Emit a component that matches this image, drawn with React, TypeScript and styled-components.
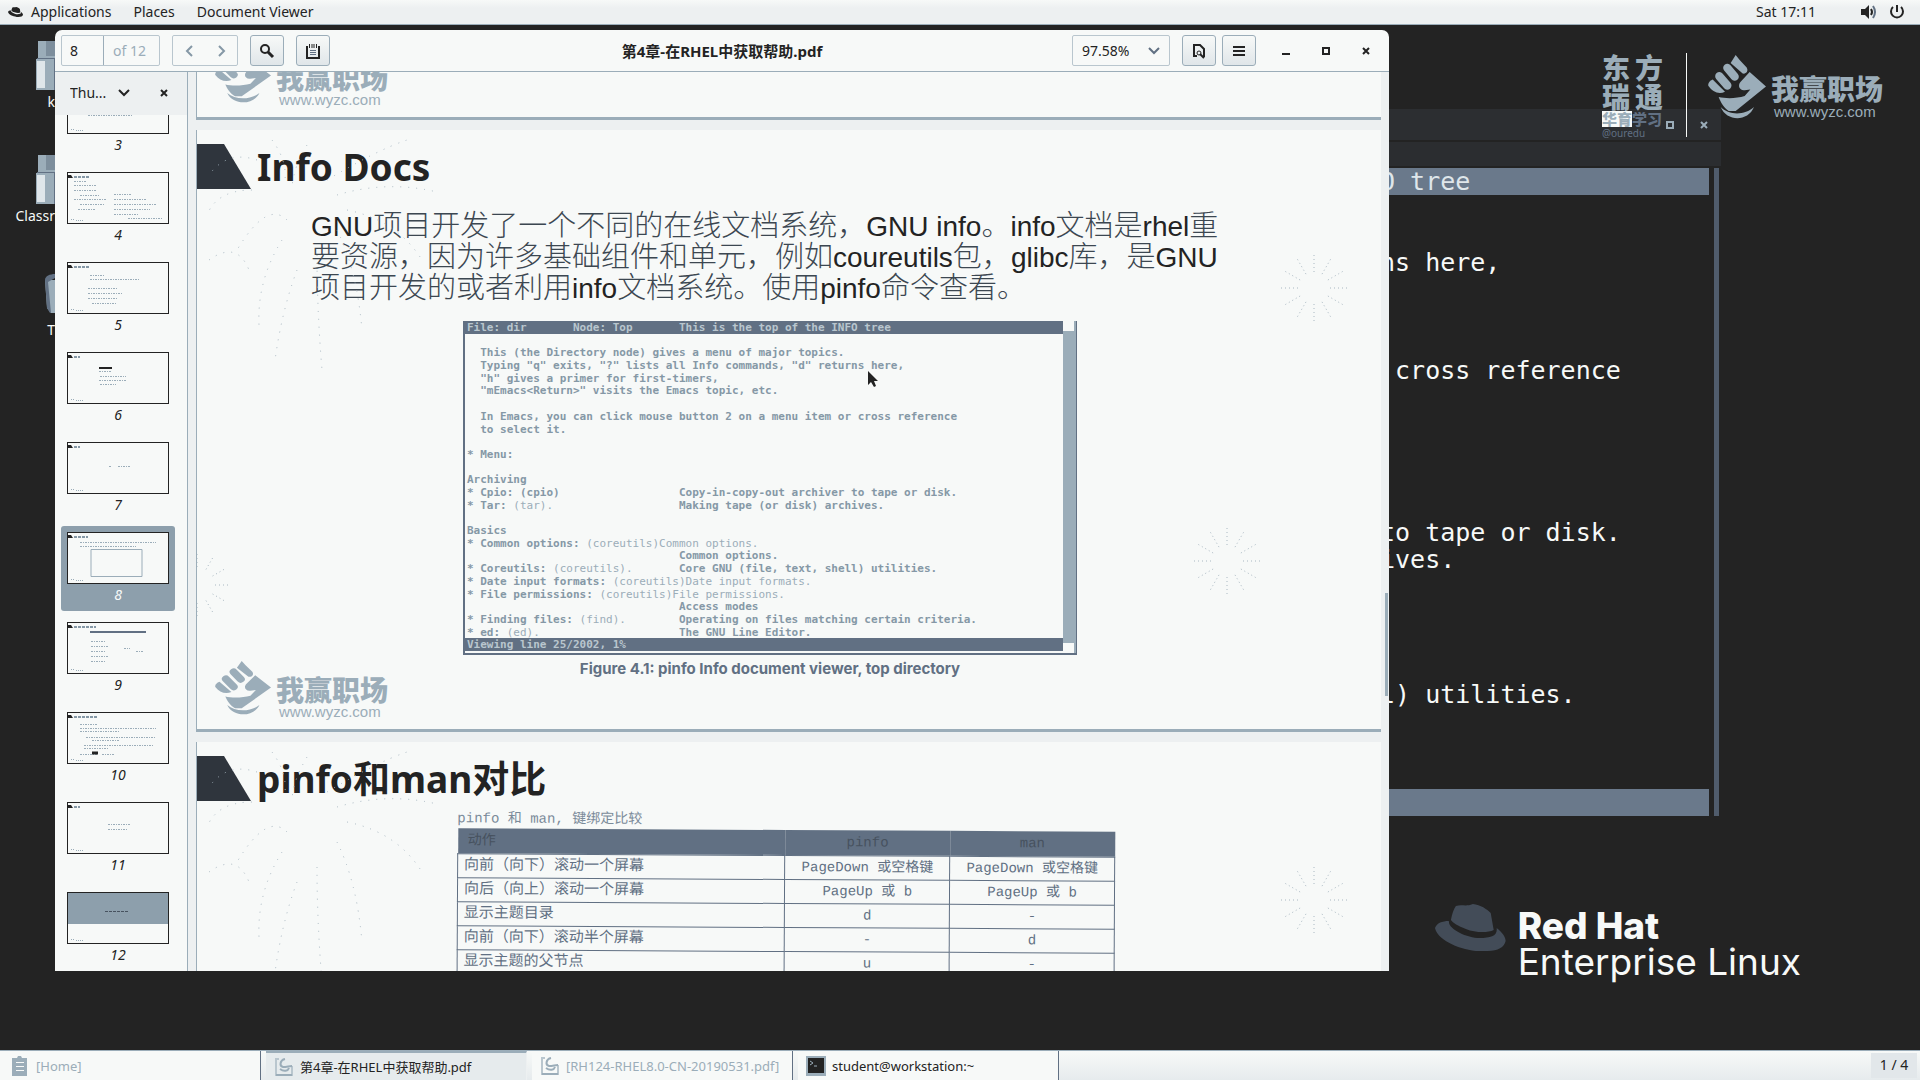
import React from "react";
import styled, { createGlobalStyle } from "styled-components";

const c = {
  paper: "#f7f9f8",
  ink: "#232323",
  mist: "#9badb9",
  slate: "#617083",
  haze: "#edf0f1",
};

const ui = `"Noto Sans", "Noto Sans CJK SC", sans-serif`;
const mono = `"DejaVu Sans Mono", monospace`;

const GlobalStyle = createGlobalStyle`
  * { box-sizing: border-box; }
  body { margin: 0; background: ${c.ink}; }
  button, input, select { font: inherit; color: inherit; margin: 0; }
  h1, h2, p, ul, figure { margin: 0; padding: 0; }
`;

const Screen = styled.div`
  height: 100vh;
  display: flex;
  flex-direction: column;
  overflow: hidden;
  background: ${c.ink};
  color: ${c.ink};
  font: 14px/20px ${ui};
`;

const TopBar = styled.header`
  display: flex;
  align-items: center;
  height: 25px;
  padding: 0 15px 0 8px;
  background: linear-gradient(${c.paper}, ${c.haze} 8px);
  border-bottom: 1px solid ${c.mist};
`;

const TopItem = styled.button`
  display: flex;
  align-items: center;
  gap: 8px;
  margin-right: 22px;
  padding: 0;
  border: 0;
  background: none;
  line-height: 20px;
`;

const Tray = styled.div`
  display: flex;
  align-items: center;
  gap: 12px;
  margin-left: auto;
`;

const Clock = styled.span`
  margin-right: 33px;
`;

const Workspace = styled.main`
  position: relative;
  flex: 1;
  min-height: 0;
`;

/* Desktop launchers */
const Launchers = styled.div`
  display: flex;
  flex-direction: column;
  width: 55px;
  padding-top: 16px;
  color: ${c.paper};
`;

const Launcher = styled.div`
  display: flex;
  flex-direction: column;
  align-items: flex-end;
  gap: 2px;
  height: 114px;
`;

/* Terminal window */
const Terminal = styled.section`
  position: absolute;
  left: 1380px;
  right: 199px;
  top: 84px;
  bottom: 234px;
  display: flex;
  flex-direction: column;
  overflow: hidden;
`;

const TermTitle = styled.div`
  display: flex;
  justify-content: flex-end;
  align-items: center;
  gap: 26px;
  height: 31px;
  padding: 0 13px;
  background: #2c2e31;
`;

const TermMenu = styled.div`
  height: 24px;
  margin: 2px 0;
  background: #2b2d30;
`;

const TermRow = styled.div`
  display: flex;
  gap: 3px;
`;

const TermScreen = styled.div`
  flex: 1;
  overflow: hidden;
  color: ${c.paper};
  font: 25px/27px ${mono};
  white-space: pre;
`;

const TermBar = styled.div`
  height: 27px;
  background: #6a798b;
  color: #dfe6ea;
`;

const TermLine = styled.div`
  height: 27px;
`;

const TermScroll = styled.div`
  width: 9px;
  padding: 0 2px;
  background: #505c6c content-box;
`;

/* Branding on the wallpaper */
const Brand = styled.div`
  position: absolute;
  right: 37px;
  top: 28px;
  display: flex;
  align-items: flex-start;
  color: ${c.mist};
`;

const School = styled.div`
  display: grid;
  grid-template-columns: 33px 34px;
  font: 900 28px/29px "Noto Sans CJK SC", sans-serif;
`;

const SchoolTag = styled.div`
  display: flex;
  grid-column: span 2;
  align-items: center;
  font-size: 15px;
  line-height: 16px;
  b { background: ${c.paper}; color: ${c.mist}; }
  span { color: ${c.slate}; }
`;

const SchoolNote = styled.small`
  grid-column: span 2;
  color: ${c.slate};
  font: 10px/12px ${ui};
`;

const Rule = styled.div`
  width: 1px;
  height: 84px;
  margin: 0 21px 0 17px;
  background: ${c.paper};
`;

const LogoBox = styled.div<{ $large?: boolean }>`
  display: flex;
  align-items: flex-start;
  gap: 5px;
  padding-top: ${(p) => (p.$large ? 2 : 0)}px;
  color: ${c.mist};
`;

const LogoWords = styled.div<{ $large?: boolean }>`
  padding-top: ${(p) => (p.$large ? 16 : 12)}px;
  b {
    display: block;
    font: 900 28px / ${(p) => (p.$large ? 34 : 32)}px "Noto Sans CJK SC", sans-serif;
  }
  span { display: block; padding-left: 3px; font: 15px/14px "Liberation Sans", sans-serif; }
`;

const RedHat = styled.div`
  position: absolute;
  right: 119px;
  bottom: 70px;
  display: flex;
  gap: 12px;
  width: 366px;
  color: ${c.paper};
  font: 37px/36px Inter, sans-serif;
  white-space: nowrap;
  b { display: block; font-weight: 800; }
  div { padding-top: 4px; }
`;

/* Document viewer */
const Viewer = styled.section`
  position: absolute;
  left: 55px;
  right: 531px;
  top: 5px;
  bottom: 79px;
  display: flex;
  flex-direction: column;
  overflow: hidden;
  border-radius: 7px 7px 0 0;
  background: ${c.paper};
`;

const Toolbar = styled.div`
  display: grid;
  grid-template-columns: 1fr auto 1fr;
  align-items: center;
  height: 42px;
  padding: 0 6px;
  border-bottom: 1px solid ${c.mist};
`;

const Tools = styled.div<{ $end?: boolean }>`
  display: flex;
  align-items: center;
  justify-content: ${(p) => (p.$end ? "flex-end" : "flex-start")};
  gap: ${(p) => (p.$end ? 6 : 12)}px;
`;

const Group = styled.div`
  display: flex;
  height: 31px;
  border: 1px solid #b9c6ce;
  border-radius: 2px;
  color: ${c.mist};
  > * + * { border-left: 1px solid ${c.mist}; }
`;

const PageInput = styled.input`
  width: 41px;
  padding: 0 8px;
  border: 0;
  background: none;
  color: ${c.ink};
`;

const PageTotal = styled.label`
  width: 56px;
  padding: 0 9px;
  line-height: 29px;
`;

const NavButton = styled.button`
  display: grid;
  place-items: center;
  width: 32px;
  padding: 0;
  border: 0;
  background: none;
`;

const ToolButton = styled.button`
  display: grid;
  place-items: center;
  width: 34px;
  height: 31px;
  padding: 0;
  border: 1px solid ${c.mist};
  border-radius: 3px;
  background: linear-gradient(${c.paper}, #e0e6e9);
`;

const DocTitle = styled.h1`
  font: 700 15px/20px ${ui};
`;

const Drop = styled.div`
  display: grid;
  align-items: center;
  > * { grid-area: 1 / 1; }
  svg { justify-self: end; margin-right: 10px; pointer-events: none; }
`;

const ZoomSelect = styled.select`
  appearance: none;
  width: 98px;
  height: 31px;
  padding: 0 28px 0 9px;
  border: 1px solid #b9c6ce;
  border-radius: 2px;
  background: none;
`;

const ZoomWrap = styled(Drop)`
  margin-right: 6px;
`;

const WinButtons = styled.div`
  display: flex;
  gap: 6px;
  margin-left: 7px;
`;

const WinButton = styled.button`
  display: grid;
  place-items: center;
  width: 34px;
  height: 30px;
  padding: 0;
  border: 0;
  background: none;
`;

const Body = styled.div`
  flex: 1;
  min-height: 0;
  display: flex;
`;

const Sidebar = styled.aside`
  width: 133px;
  display: flex;
  flex-direction: column;
  border-right: 1px solid ${c.mist};
`;

const SideHead = styled.div`
  display: flex;
  align-items: center;
  justify-content: space-between;
  flex: none;
  height: 43px;
  padding: 0 15px 2px;
  background: ${c.haze};
`;

const SideSelect = styled.select`
  appearance: none;
  width: 70px;
  border: 0;
  padding: 0;
  background: none;
`;

const PlainButton = styled.button`
  display: grid;
  padding: 4px;
  border: 0;
  background: none;
`;

const Thumbs = styled.div`
  flex: 1;
  min-height: 0;
  display: flex;
  flex-direction: column;
  justify-content: flex-end;
  gap: 5px;
  padding: 0 12px 0 6px;
  overflow: hidden;
`;

const Thumb = styled.button<{ $on?: boolean }>`
  flex: none;
  display: flex;
  flex-direction: column;
  align-items: center;
  gap: 1px;
  height: 85px;
  padding: 6px 0 0;
  border: 0;
  border-radius: 3px;
  background: ${(p) => (p.$on ? "#8d9fac" : "none")};
  color: ${(p) => (p.$on ? c.paper : c.ink)};
  font-style: italic;
`;

const ThumbArt = styled.svg`
  width: 102px;
  height: 52px;
  border: 1px solid ${c.ink};
  background: ${c.paper};
`;

const Pages = styled.div`
  flex: 1;
  min-width: 0;
  display: flex;
  flex-direction: column;
  gap: 10px;
  padding: 0 8px;
  background: ${c.haze};
  overflow: hidden;
`;

const Page = styled.article<{ $kind: "tail" | "full" | "head" }>`
  position: relative;
  flex: ${(p) => (p.$kind === "head" ? "1 1 0" : "none")};
  height: ${(p) => (p.$kind === "tail" ? "48px" : p.$kind === "full" ? "602px" : "auto")};
  min-height: 0;
  display: flex;
  flex-direction: column;
  overflow: hidden;
  background: ${c.paper};
  border-left: 1px solid ${c.mist};
  border-bottom: ${(p) => (p.$kind === "head" ? 0 : 3)}px solid ${c.mist};
`;

const Sparks = styled.svg`
  position: absolute;
  inset: 0;
  width: 100%;
  height: 100%;
  pointer-events: none;
`;

const Heading = styled.div`
  display: flex;
  align-items: center;
  gap: 6px;
  padding-top: 14px;
  h2 { font: 700 37px/45px "Noto Sans", "Noto Sans CJK SC", sans-serif; }
`;

const Prose = styled.p`
  padding: 22px 0 0 114px;
  color: #3c4751;
  font: 300 29px/31px "Liberation Sans", "Noto Sans CJK SC", sans-serif;
  white-space: nowrap;
`;

const Latin = styled.span`
  color: ${c.ink};
  font-size: 28px;
  font-weight: 400;
`;

const Shot = styled.figure`
  align-self: center;
  margin: 17px 38px 0 0;
  text-align: center;
`;

const Console = styled.div`
  display: grid;
  grid-template-columns: 1fr 13px;
  grid-template-rows: minmax(0, 1fr);
  width: 614px;
  height: 334px;
  border: solid ${c.slate};
  border-width: 0 1px 2px 2px;
  text-align: left;
`;

const ConsoleLines = styled.div`
  display: grid;
  grid-auto-rows: minmax(0, 1fr);
  padding-bottom: 2px;
  font: 700 11px/14px ${mono};
  color: #8598a6;
`;

const ConsoleLine = styled.div<{ $bar?: boolean }>`
  display: flex;
  min-height: 0;
  padding-left: 2px;
  white-space: pre;
  background: ${(p) => (p.$bar ? c.slate : "none")};
  color: ${(p) => (p.$bar ? "#b9c6ce" : "inherit")};
  i { font-style: normal; font-weight: 400; color: ${c.mist}; }
`;

const ConsoleScroll = styled.div`
  display: flex;
  flex-direction: column;
  justify-content: space-between;
  background: ${c.mist};
  &::before, &::after {
    content: "";
    width: 11px;
    height: 10px;
    background: ${c.paper};
  }
`;

const Caption = styled.figcaption`
  padding-top: 4px;
  color: ${c.slate};
  font: 700 15px/20px Inter, sans-serif;
`;

/* Watermark laid over the lower left corner of every slide */
const PageLogo = styled.div`
  position: absolute;
  left: 18px;
  bottom: 10px;
`;

const KeyTable = styled.table`
  width: 658px;
  margin: 0 auto;
  border-collapse: collapse;
  color: ${c.slate};
  font: 14px/23px "Liberation Mono", "Noto Sans CJK SC", monospace;
  transform: rotate(0.3deg);
  caption { text-align: left; color: #7b8b9a; line-height: 19px; }
  th { height: 25px; padding: 0 10px; background: ${c.slate}; color: #47525f; font-weight: 400; }
  td { height: 24px; padding: 0; border: 1px solid ${c.slate}; text-align: center; }
  th:first-child { text-align: left; }
  td:first-child { padding-left: 6px; text-align: left; font-size: 15px; }
`;

const TableHolder = styled.div`
  padding: 10px 6px 0 0;
`;

const ScrollThumb = styled.div`
  position: absolute;
  right: 1px;
  top: 563px;
  width: 3px;
  height: 103px;
  background: ${c.mist};
`;

const Pointer = styled.svg`
  position: absolute;
  left: 868px;
  top: 346px;
`;

/* Bottom window list */
const TaskBar = styled.footer`
  display: flex;
  height: 30px;
  gap: 5px;
  border-top: 1px solid ${c.mist};
  background: linear-gradient(${c.paper}, #e6ebed);
`;

const Task = styled.button<{ $on?: boolean; $dim?: boolean }>`
  display: flex;
  align-items: center;
  gap: 6px;
  width: 261px;
  padding: 0 8px;
  border: 0;
  border-right: 1px solid ${(p) => (p.$on ? c.haze : c.slate)};
  border-top: ${(p) => (p.$on ? 2 : 0)}px solid ${c.mist};
  background: ${(p) => (p.$on ? "#e6ebed" : c.paper)};
  color: ${(p) => (p.$dim ? c.mist : c.ink)};
  font: 13px/18px ${ui};
  white-space: nowrap;
`;

const Pager = styled.span`
  width: 46px;
  margin: 2px 3px 2px auto;
  background: #e2e7ea;
  text-align: center;
  line-height: 24px;
`;

const Chevron = ({ d = "M1 1l5 5 5-5", w = 12, h = 8, color = c.slate }) => (
  <svg width={w} height={h} viewBox={`0 0 ${w} ${h}`} fill="none" stroke={color} strokeWidth="2">
    <path d={d} />
  </svg>
);

const Cross = ({ color = c.ink, size = 8 }) => (
  <svg width={size} height={size} viewBox="0 0 8 8" stroke={color} strokeWidth="2">
    <path d="M1 1l6 6M7 1l-6 6" />
  </svg>
);

const Fist = ({ width = 56, height = 54 }) => (
  <svg width={width} height={height} viewBox="0 0 174 193" preserveAspectRatio="none" fill="currentColor">
    <path d="M83 0l12 15 21 23c6 10-1 20-12 18L68 24z" />
    <g stroke="currentColor" strokeWidth="25" strokeLinecap="round">
      <path d="M58 39l22 26M34 64l24 28" />
    </g>
    <path d="M14 74l37 37c-18 9-38 1-50-18-2-8 4-15 13-19z" />
    <path d="M125 51l49 44-91 74H62C46 158 38 142 32 127c20 5 54 5 78-3l17-20-17 2c-16 2-22-14-12-25z" />
    <path d="M38 157c24 25 72 26 100 0-18 45-82 45-100 0z" />
  </svg>
);

const WyzcLogo = ({ large }: { large?: boolean }) => (
  <LogoBox $large={large}>
    <Fist width={large ? 58 : 56} height={large ? 64 : 54} />
    <LogoWords $large={large}>
      <b>我赢职场</b>
      <span>www.wyzc.com</span>
    </LogoWords>
  </LogoBox>
);

const Hat = ({ width = 71, color = "#434c58" }) => (
  <svg width={width} height={(width * 47) / 71} viewBox="0 0 71 47" fill={color}>
    <path d="M21 2c6-2 10 1 17-2 8 1 14 5 18 9l3 17c-6 3-18 3-28-1-8-3-13-6-15-9 1-6 3-11 5-14z" />
    <path d="M14 17c-1 8 18 17 31 17 11 0 18-2 17-10 6 5 9 9 9 13-2 9-12 11-30 10C22 45 2 35 0 24c2-5 7-7 14-7z" />
  </svg>
);

const Box = () => (
  <svg width="19" height="49" viewBox="0 0 19 49">
    <path fill={c.mist} d="M2 0h17v18H2zM0 18h19v31H0z" />
    <path fill="#7d8e9c" d="M10 0h9v15h-9z" />
    <path fill="#dfe6ea" d="M1 20h8v27H1z" />
    <path fill={c.slate} d="M1 17h18v1H1zM18 18h1v31h-1z" />
  </svg>
);

const Trash = () => (
  <svg width="10" height="49" viewBox="0 0 10 49">
    <path fill={c.mist} d="M0 11h10v33H6l-4-5z" />
    <path fill={c.slate} d="M0 11c0-4 5-6 10-6v4L3 13l3 31H5l-3-5z" />
  </svg>
);

const PdfIcon = () => (
  <svg width="20" height="20" viewBox="0 0 20 20" fill="none" stroke={c.mist} strokeWidth="2">
    <path d="M5 2H2v16h16V9" stroke="#b9c6ce" />
    <path d="M2 18h16" />
    <path d="M11 2c-5 1-6 7-2 8 4 0 6-1 9-1M6 12c4 3 8 2 9-1" />
  </svg>
);

const rays = (cx: number, cy: number, r0: number, r1: number, n: number) =>
  Array.from({ length: n }, (_, i) => {
    const a = (i * 2 * Math.PI) / n;
    const p = (r: number) => `${(cx + r * Math.cos(a)).toFixed(1)} ${(cy + r * Math.sin(a)).toFixed(1)}`;
    return `M${p(r0)}L${p(r1)}`;
  }).join("");

const arcs =
  "M75 10Q90 30 88 50M110 15Q95 40 95 60M55 60Q20 60 10 85M90 90Q70 70 40 120M85 110Q60 150 62 195M100 140Q85 180 78 230M120 125Q120 180 125 240M140 100Q160 140 165 200M150 80Q200 90 225 130M130 50Q180 20 210 10M140 65Q190 50 240 62M60 30Q30 20 12 45M12 130Q40 110 52 140";

const Fireworks = ({ low }: { low?: boolean }) => (
  <Sparks fill="none" stroke="#a9b8c2" strokeWidth="1" strokeDasharray="1 7">
    <path d={arcs} />
    <svg x="100%" overflow="visible">
      <path strokeDasharray="1 3" d={rays(-67, 158, 16, 33, 12) + (low ? rays(-154, 431, 16, 33, 12) : "")} />
    </svg>
    {low && <path strokeDasharray="1 3" d={rays(0, 455, 18, 34, 12)} />}
  </Sparks>
);

const Slab = () => (
  <svg width="54" height="45" viewBox="0 0 54 45">
    <path fill="#2f353d" d="M0 0h27l27 45H0z" />
  </svg>
);

type Bit = [number, number, number];
const thumbs: { n: number; title: number; bits: Bit[] }[] = [
  { n: 3, title: 22, bits: [[20, 32, 44]] },
  { n: 4, title: 16, bits: [[6, 8, 12], [6, 12, 22], [6, 17, 22], [12, 22, 20], [6, 26, 32], [12, 31, 24], [10, 36, 18], [46, 21, 18], [46, 26, 32], [46, 31, 42], [46, 36, 36], [46, 41, 24], [60, 45, 34]] },
  { n: 5, title: 16, bits: [[22, 12, 14], [22, 16, 50], [20, 25, 30], [20, 30, 34], [20, 35, 30], [24, 40, 24]] },
  { n: 6, title: 6, bits: [[31, 18, 12], [32, 23, 26], [31, 27, 28], [32, 31, 16]] },
  { n: 7, title: 6, bits: [[41, 23, 3], [50, 23, 12]] },
  { n: 8, title: 14, bits: [[12, 9, 76], [12, 13, 56]] },
  { n: 9, title: 22, bits: [[23, 18, 14], [23, 23, 18], [23, 28, 14], [23, 33, 18], [23, 38, 14], [56, 25, 6], [68, 28, 8]] },
  { n: 10, title: 24, bits: [[12, 11, 17], [12, 15, 76], [12, 18, 40], [18, 24, 70], [24, 27, 28], [16, 32, 70], [16, 35, 24], [12, 41, 18], [34, 41, 12]] },
  { n: 11, title: 6, bits: [[40, 21, 22], [40, 26, 20]] },
  { n: 12, title: 0, bits: [] },
];

const ThumbPicture = ({ n, title, bits }: (typeof thumbs)[number]) => (
  <ThumbArt viewBox="0 0 100 50" fill="none" stroke={c.mist} strokeWidth="1">
    {n === 12 && <path fill="#8d9fac" stroke="none" d="M0 0h100v31H0z" />}
    {n === 12 && <path stroke="#47525f" strokeDasharray="3 1" d="M37 18.500h24" />}
    {title > 0 && <path fill={c.ink} stroke="none" d="M0 2h3l2 3H0z" />}
    {title > 0 && <path stroke="#8598a6" strokeWidth="2" strokeDasharray="3 1" d={`M6 4h${title}`} />}
    {bits.map(([x, y, w]) => (
      <path key={`${x}-${y}`} strokeDasharray="2 1 1 1" d={`M${x} ${y + 0.5}h${w}`} />
    ))}
    {n === 6 && <path stroke={c.ink} strokeWidth="2" d="M31 15h13" />}
    {n === 8 && <path d="M23 16.500h51v27H23z" />}
    {n === 9 && <path stroke={c.slate} strokeWidth="2" d="M22 9h56" />}
    {n === 10 && <path stroke={c.ink} strokeWidth="3" d="M24 40h6" />}
    <path strokeDasharray="1 1" d="M3 46.500h4M8 47.500h8" />
  </ThumbArt>
);

const info: [string, string?, string?][] = [
  [""],
  [`  This (the Directory node) gives a menu of major topics.`],
  [`  Typing "q" exits, "?" lists all Info commands, "d" returns here,`],
  [`  "h" gives a primer for first-timers,`],
  [`  "mEmacs<Return>" visits the Emacs topic, etc.`],
  [""],
  [`  In Emacs, you can click mouse button 2 on a menu item or cross reference`],
  [`  to select it.`],
  [""],
  [`* Menu:`],
  [""],
  [`Archiving`],
  [`* Cpio: (cpio)                  Copy-in-copy-out archiver to tape or disk.`],
  [`* Tar: `, `(tar).                   `, `Making tape (or disk) archives.`],
  [""],
  [`Basics`],
  [`* Common options: `, `(coreutils)Common options.`],
  [`                                Common options.`],
  [`* Coreutils: `, `(coreutils).       `, `Core GNU (file, text, shell) utilities.`],
  [`* Date input formats: `, `(coreutils)Date input formats.`],
  [`* File permissions: `, `(coreutils)File permissions.`],
  [`                                Access modes`],
  [`* Finding files: `, `(find).        `, `Operating on files matching certain criteria.`],
  [`* ed: `, `(ed).                     `, `The GNU Line Editor.`],
];

const node = "File: dir       Node: Top       This is the top of the INFO tree";

/* The part of the terminal that shows to the right of the viewer, by line */
const termLines = [
  "", "", "ns here,", "", "", "", " cross reference", "", "", "", "", "",
  "to tape or disk.", "ives.", "", "", "", "", "l) utilities.", "", "", "",
];

const keys = [
  ["向前（向下）滚动一个屏幕", "PageDown 或空格键", "PageDown 或空格键"],
  ["向后（向上）滚动一个屏幕", "PageUp 或 b", "PageUp 或 b"],
  ["显示主题目录", "d", "-"],
  ["向前（向下）滚动半个屏幕", "-", "d"],
  ["显示主题的父节点", "u", "-"],
];

export default function App() {
  return (
    <Screen>
      <GlobalStyle />
      <TopBar>
        <TopItem>
          <Hat width={15} color={c.ink} />
          Applications
        </TopItem>
        <TopItem>Places</TopItem>
        <TopItem>Document Viewer</TopItem>
        <Tray>
          <Clock>Sat 17:11</Clock>
          <svg width="16" height="16" viewBox="0 0 16 16" fill="none" stroke={c.ink} strokeWidth="2">
            <path fill={c.ink} stroke="none" d="M0 5h4l4-4v14l-4-4H0z" />
            <path d="M10 5q2 3 0 6" />
            <path stroke={c.slate} d="M12 2q4 6 0 12" />
          </svg>
          <svg width="16" height="16" viewBox="0 0 16 16" fill="none" stroke={c.ink} strokeWidth="2">
            <path d="M8 1v7M4 3a6 6 0 1 0 8 0" />
          </svg>
        </Tray>
      </TopBar>

      <Workspace>
        <Launchers>
          <Launcher><Box />k</Launcher>
          <Launcher><Box />Classr</Launcher>
          <Launcher><Trash />T</Launcher>
        </Launchers>

        <Terminal>
          <TermTitle>
            <svg width="8" height="8" viewBox="0 0 8 8" fill="none" stroke={c.mist} strokeWidth="2">
              <path d="M1 1h6v6H1z" />
            </svg>
            <Cross color={c.mist} />
          </TermTitle>
          <TermMenu />
          <TermRow>
            <TermScreen>
              <TermBar>O tree</TermBar>
              {termLines.map((line, i) => (
                <TermLine key={i}>{line}</TermLine>
              ))}
              <TermBar />
            </TermScreen>
            <TermScroll />
          </TermRow>
        </Terminal>

        <Brand>
          <School>
            <span>东</span>
            <span>方</span>
            <span>瑞</span>
            <span>通</span>
            <SchoolTag><b>华育</b><span>学习</span></SchoolTag>
            <SchoolNote>@ouredu</SchoolNote>
          </School>
          <Rule />
          <WyzcLogo large />
        </Brand>

        <RedHat>
          <Hat />
          <div>
            <b>Red Hat</b>
            Enterprise Linux
          </div>
        </RedHat>

        <Viewer>
          <Toolbar>
            <Tools>
              <Group>
                <PageInput id="page" defaultValue="8" />
                <PageTotal htmlFor="page">of 12</PageTotal>
              </Group>
              <Group>
                <NavButton aria-label="Previous page"><Chevron d="M7 1L2 6l5 5" w={9} h={12} color="#8598a6" /></NavButton>
                <NavButton aria-label="Next page"><Chevron d="M2 1l5 5-5 5" w={9} h={12} color="#8598a6" /></NavButton>
              </Group>
              <ToolButton aria-label="Find">
                <svg width="16" height="16" viewBox="0 0 16 16" fill="none" stroke={c.ink} strokeWidth="2">
                  <circle cx="6" cy="6" r="4" />
                  <path d="M9 9l5 5" strokeWidth="3" />
                </svg>
              </ToolButton>
              <ToolButton aria-label="Annotate">
                <svg width="14" height="16" viewBox="0 0 14 16" fill="none" stroke={c.ink} strokeWidth="1">
                  <path d="M1 3v12h12V3" strokeWidth="2" />
                  <path d="M3.500 1v4M6 1v4M8 1v4M10.500 1v4" />
                  <path stroke={c.slate} d="M4 7.500h6M4 9.500h6M4 11.500h6" />
                </svg>
              </ToolButton>
            </Tools>
            <DocTitle>第4章-在RHEL中获取帮助.pdf</DocTitle>
            <Tools $end>
              <ZoomWrap>
                <ZoomSelect aria-label="Zoom"><option>97.58%</option></ZoomSelect>
                <Chevron />
              </ZoomWrap>
              <ToolButton aria-label="Find in document">
                <svg width="14" height="16" viewBox="0 0 14 16" fill="none" stroke={c.ink} strokeWidth="2">
                  <path d="M5 13H2V2h6l4 4v8" />
                  <circle cx="7" cy="10" r="2" strokeWidth="1" />
                  <path d="M8 11l4 4" />
                </svg>
              </ToolButton>
              <ToolButton aria-label="Menu">
                <svg width="12" height="10" viewBox="0 0 12 10" stroke={c.ink} strokeWidth="2">
                  <path d="M0 1h12M0 5h12M0 9h12" />
                </svg>
              </ToolButton>
              <WinButtons>
                <WinButton aria-label="Minimize">
                  <svg width="8" height="8" viewBox="0 0 8 8" stroke={c.ink} strokeWidth="2"><path d="M0 7h8" /></svg>
                </WinButton>
                <WinButton aria-label="Maximize">
                  <svg width="8" height="8" viewBox="0 0 8 8" fill="none" stroke={c.ink} strokeWidth="2"><path d="M1 1h6v6H1z" /></svg>
                </WinButton>
                <WinButton aria-label="Close"><Cross /></WinButton>
              </WinButtons>
            </Tools>
          </Toolbar>

          <Body>
            <Sidebar>
              <SideHead>
                <Drop>
                  <SideSelect aria-label="Side pane"><option>Thu...</option></SideSelect>
                  <Chevron color={c.ink} />
                </Drop>
                <PlainButton aria-label="Close side pane"><Cross /></PlainButton>
              </SideHead>
              <Thumbs>
                {thumbs.map((t) => (
                  <Thumb key={t.n} $on={t.n === 8}>
                    <ThumbPicture {...t} />
                    {t.n}
                  </Thumb>
                ))}
              </Thumbs>
            </Sidebar>

            <Pages>
              <Page $kind="tail">
                <PageLogo><WyzcLogo /></PageLogo>
              </Page>

              <Page $kind="full">
                <Fireworks low />
                <Heading><Slab /><h2>Info Docs</h2></Heading>
                <Prose>
                  <Latin>GNU</Latin>项目开发了一个不同的在线文档系统，<Latin>GNU info</Latin>。<Latin>info</Latin>文档是<Latin>rhel</Latin>重
                  <br />
                  要资源，因为许多基础组件和单元，例如<Latin>coureutils</Latin>包，<Latin>glibc</Latin>库，是<Latin>GNU</Latin>
                  <br />
                  项目开发的或者利用<Latin>info</Latin>文档系统。使用<Latin>pinfo</Latin>命令查看。
                </Prose>
                <Shot>
                  <Console>
                    <ConsoleLines>
                      <ConsoleLine $bar>{node}</ConsoleLine>
                      {info.map(([a, b, d], i) => (
                        <ConsoleLine key={i}>{a}{b && <i>{b}</i>}{d}</ConsoleLine>
                      ))}
                      <ConsoleLine $bar>Viewing line 25/2002, 1%</ConsoleLine>
                    </ConsoleLines>
                    <ConsoleScroll />
                  </Console>
                  <Caption>Figure 4.1: pinfo Info document viewer, top directory</Caption>
                </Shot>
                <PageLogo><WyzcLogo /></PageLogo>
              </Page>

              <Page $kind="head">
                <Fireworks />
                <Heading><Slab /><h2>pinfo和man对比</h2></Heading>
                <TableHolder>
                  <KeyTable>
                    <caption>pinfo 和 man, 键绑定比较</caption>
                    <colgroup>
                      <col width="328" />
                      <col width="165" />
                      <col width="165" />
                    </colgroup>
                    <thead>
                      <tr><th>动作</th><th>pinfo</th><th>man</th></tr>
                    </thead>
                    <tbody>
                      {keys.map((row) => (
                        <tr key={row[0]}>{row.map((cell, i) => <td key={i}>{cell}</td>)}</tr>
                      ))}
                    </tbody>
                  </KeyTable>
                </TableHolder>
              </Page>
            </Pages>
          </Body>
          <ScrollThumb />
        </Viewer>

        <Pointer width="11" height="17" viewBox="0 0 11 17" fill={c.ink}>
          <path d="M0 0l10 10H6l2 5-2 1-3-5-3 3z" />
        </Pointer>
      </Workspace>

      <TaskBar>
        <Task $dim>
          <svg width="22" height="20" viewBox="0 0 22 20">
            <path fill={c.mist} d="M4 2h5l1-2h3l1 2h5v18H4z" />
            <path stroke={c.paper} d="M8 6.500h8M8 10.500h8M8 14.500h8" />
          </svg>
          [Home]
        </Task>
        <Task $on><PdfIcon />第4章-在RHEL中获取帮助.pdf</Task>
        <Task $dim><PdfIcon />[RH124-RHEL8.0-CN-20190531.pdf]</Task>
        <Task>
          <svg width="20" height="20" viewBox="0 0 20 20">
            <path fill={c.mist} d="M0 0h20v20H0z" />
            <path fill={c.ink} d="M2 2h16v15H2z" />
            <path fill="none" stroke={c.mist} d="M4 5l3 2-3 2M8 10h3" />
          </svg>
          student@workstation:~
        </Task>
        <Pager>1 / 4</Pager>
      </TaskBar>
    </Screen>
  );
}
